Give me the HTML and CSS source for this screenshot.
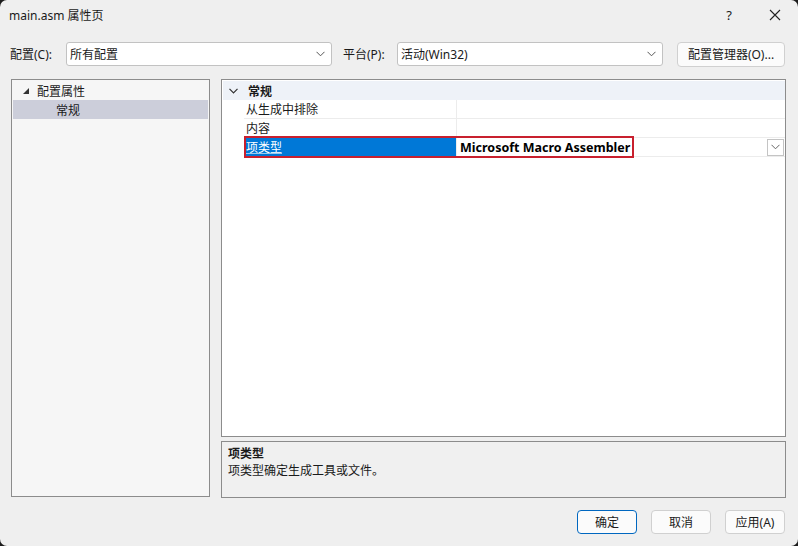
FILE: index.html
```html
<!DOCTYPE html>
<html lang="zh-CN">
  <head>
    <meta charset="UTF-8" />
    <title>main.asm 属性页</title>
    <link rel="stylesheet" href="styles.css">
  </head>
  <body>
    <div class="window">
      <div class="titlebar">
        <span class="title">main.asm 属性页</span>
        <span class="help">?</span>
        <span class="close">
          <svg width="12" height="12" viewBox="0 0 12 12"><path d="M1 1 L11 11 M11 1 L1 11" stroke="#222" stroke-width="1.1" fill="none"/></svg>
        </span>
      </div>

      <div class="toolbar">
        <label class="lbl">配置(C):</label>
        <div class="combo combo-config">
          <span>所有配置</span>
          <svg class="chev" width="9" height="6" viewBox="0 0 9 6"><path d="M0.5 0.8 L4.5 4.8 L8.5 0.8" stroke="#555" stroke-width="1" fill="none"/></svg>
        </div>
        <label class="lbl lbl-platform">平台(P):</label>
        <div class="combo combo-platform">
          <span>活动(Win32)</span>
          <svg class="chev" width="9" height="6" viewBox="0 0 9 6"><path d="M0.5 0.8 L4.5 4.8 L8.5 0.8" stroke="#555" stroke-width="1" fill="none"/></svg>
        </div>
        <button class="btn btn-manager">配置管理器(O)...</button>
      </div>

      <div class="main">
        <div class="tree">
          <div class="tree-item">
            <svg class="tri" width="6" height="6" viewBox="0 0 6 6"><polygon points="6,0 6,6 0,6" fill="#333"/></svg>
            <span>配置属性</span>
          </div>
          <div class="tree-item sub selected"><span>常规</span></div>
        </div>

        <div class="right">
          <div class="grid">
            <div class="cat">
              <svg class="cat-chev" width="9" height="6" viewBox="0 0 9 6"><path d="M0.5 0.8 L4.5 4.8 L8.5 0.8" stroke="#333" stroke-width="1.2" fill="none"/></svg>
              <span>常规</span>
            </div>
            <div class="row">
              <div class="name">从生成中排除</div>
              <div class="value"></div>
            </div>
            <div class="row">
              <div class="name">内容</div>
              <div class="value"></div>
            </div>
            <div class="row active">
              <div class="name"><span class="u">项类型</span></div>
              <div class="value">
                <b>Microsoft Macro Assembler</b>
                <span class="drop">
                  <svg width="9" height="6" viewBox="0 0 9 6"><path d="M0.5 0.8 L4.5 4.8 L8.5 0.8" stroke="#666" stroke-width="1" fill="none"/></svg>
                </span>
              </div>
              <div class="mark"></div>
            </div>
          </div>
          <div class="desc">
            <div class="desc-title">项类型</div>
            <div class="desc-text">项类型确定生成工具或文件。</div>
          </div>
        </div>
      </div>

      <div class="buttons">
        <button class="btn btn-ok">确定</button>
        <button class="btn">取消</button>
        <button class="btn">应用(A)</button>
      </div>
    </div>
  </body>
</html>
```

FILE: styles.css
```css
* {
  box-sizing: border-box;
  margin: 0;
  padding: 0;
}
body {
  width: 798px;
  height: 546px;
  overflow: hidden;
  background: #1c1c1c;
  font-family: "Noto Sans", "Noto Sans CJK SC", sans-serif;
  font-size: 12px;
  color: #1a1a1a;
}
.window {
  width: 798px;
  height: 546px;
  background: #efefef;
  border-radius: 7px;
  overflow: hidden;
}
.titlebar {
  height: 30px;
  display: flex;
  align-items: center;
  padding: 0 0 0 9px;
}
.title {
  flex: 1;
  font-size: 12px;
}
.help {
  width: 46px;
  text-align: center;
  font-size: 13px;
}
.close {
  width: 46px;
  display: flex;
  justify-content: center;
}
.toolbar {
  display: flex;
  align-items: center;
  height: 26px;
  margin-top: 11px;
  padding-left: 10px;
}
.lbl {
  width: 56px;
}
.lbl-platform {
  width: 54px;
  margin-left: 11px;
}
.combo {
  height: 24px;
  background: #fff;
  border: 1px solid #c2c2c2;
  border-radius: 3px;
  display: flex;
  align-items: center;
  justify-content: space-between;
  padding: 0 6px 0 3px;
}
.combo-config,
.combo-platform {
  width: 266px;
}
.btn {
  font-family: "Noto Sans", "Noto Sans CJK SC", sans-serif;
  font-size: 12px;
  color: #1a1a1a;
  background: #fbfbfb;
  border: 1px solid #d0d0d0;
  border-radius: 4px;
  height: 24px;
  width: 60px;
}
.btn-manager {
  width: 108px;
  height: 25px;
  margin-left: 14px;
}
.main {
  display: flex;
  margin-top: 12px;
  padding-left: 11px;
  gap: 11px;
}
.tree {
  width: 199px;
  height: 418px;
  background: #f6f6f6;
  border: 1px solid #8c8c8c;
  padding: 1px;
}
.tree-item {
  height: 19px;
  display: flex;
  align-items: center;
  padding-left: 10px;
}
.tri {
  margin-right: 8px;
  margin-top: 1px;
}
.sub {
  padding-left: 43px;
}
.selected {
  background: #ccceda;
}
.right {
  width: 565px;
  display: flex;
  flex-direction: column;
  gap: 4px;
}
.grid {
  height: 358px;
  background: #fff;
  border: 1px solid #8c8c8c;
  padding: 1px 0 0 1px;
}
.cat {
  height: 19px;
  background: #eef2f8;
  display: flex;
  align-items: center;
  font-weight: bold;
  padding-left: 6px;
}
.cat-chev {
  margin-right: 10px;
}
.row {
  position: relative;
  height: 19px;
  margin-left: 21px;
  display: flex;
  border-bottom: 1px solid #ececec;
}
.name {
  width: 213px;
  padding-left: 2px;
  display: flex;
  align-items: center;
  border-right: 1px solid #ececec;
}
.value {
  flex: 1;
  display: flex;
  align-items: center;
  justify-content: space-between;
  padding-left: 3px;
  padding-right: 1px;
}
.active .name {
  background: #0078d7;
  color: #fff;
}
.u {
  text-decoration: underline;
  text-decoration-color: rgba(255, 255, 255, 0.6);
}
.value b {
  font-size: 12.5px;
  color: #000;
}
.drop {
  width: 17px;
  height: 17px;
  border: 1px solid #c4c4c4;
  background: #fff;
  display: flex;
  align-items: center;
  justify-content: center;
}
.mark {
  position: absolute;
  left: 0;
  top: -2px;
  width: 390px;
  height: 22px;
  border: 2px solid #c8202e;
}
.desc {
  height: 57px;
  background: #f0f0f0;
  border: 1px solid #8c8c8c;
  padding: 3px 6px;
}
.desc-title {
  font-weight: bold;
  line-height: 17px;
}
.desc-text {
  line-height: 17px;
}
.buttons {
  display: flex;
  justify-content: flex-end;
  gap: 14px;
  margin-top: 12px;
  padding-right: 13px;
}
.btn-ok {
  border: 1px solid #0067c0;
}
```
